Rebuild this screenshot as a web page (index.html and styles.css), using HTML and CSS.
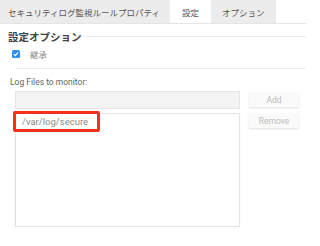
FILE: index.html
```html
<!DOCTYPE html>
<html lang="ja">
<head>
  <meta charset="UTF-8">
  <title>セキュリティログ監視ルールプロパティ</title>
  <link rel="stylesheet" href="styles.css">
</head>
<body>
  <div class="tabs">
    <div class="tab first">セキュリティログ監視ルールプロパティ</div>
    <div class="tab active">設定</div>
    <div class="tab">オプション</div>
  </div>
  <div class="content">
    <div class="section-head">
      <span class="legend">設定オプション</span>
      <span class="rule"></span>
    </div>
    <label class="check-row">
      <span class="checkbox">
        <svg viewBox="0 0 8 8" width="8" height="8"><path d="M1.8 4.2 L3.3 5.6 L6.2 2.4" fill="none" stroke="#fff" stroke-width="1.1"/></svg>
      </span>
      <span class="check-label">継承</span>
    </label>
    <div class="divider"></div>
    <div class="field-label">Log Files to monitor:</div>
    <div class="editor">
      <div class="left-col">
        <div class="path-input"></div>
        <div class="file-list">
          <div class="file-item">/var/log/secure</div>
          <div class="highlight"></div>
        </div>
      </div>
      <div class="right-col">
        <button class="btn">Add</button>
        <button class="btn">Remove</button>
      </div>
    </div>
  </div>
</body>
</html>
```

FILE: styles.css
```css
body {
  margin: 0;
  background: #fff;
  font-family: Roboto, "Noto Sans CJK JP", sans-serif;
  color: #555;
}
.tabs {
  display: flex;
  width: 306px;
  height: 23px;
  border-bottom: 1px solid #e6e6e6;
}
.tab {
  display: flex;
  align-items: center;
  padding: 0 11px;
  background: #ececec;
  font-size: 8.5px;
  color: #555;
}
.tab.first {padding-left: 8px; padding-right: 10px;}
.tab.active {background: #fff; padding: 0 12px;}
.content {width: 298px; padding-left: 8px;}
.section-head {
  display: flex;
  align-items: center;
  height: 14px;
  margin-top: 5px;
}
.legend {font-size: 10.5px; font-weight: bold; color: #444;}
.rule {flex: 1; height: 1px; background: #e8e8e8; margin-left: 4px;}
.check-row {
  display: flex;
  align-items: center;
  height: 10px;
  margin-top: 6px;
  padding-left: 4px;
}
.checkbox {
  width: 8px;
  height: 8px;
  border-radius: 1.5px;
  background: #2f8ef0;
  display: flex;
}
.check-label {font-size: 8.5px; color: #888; margin-left: 10px;}
.divider {height: 1px; background: #ececec; margin: 9px 0 0 8px;}
.field-label {font-size: 8.5px; color: #666; margin-top: 8px; padding-left: 2px; line-height: 11px;}
.editor {
  display: grid;
  grid-template-columns: 225px 50px;
  column-gap: 9px;
  margin-top: 3px;
  margin-left: 7px;
}
.path-input {
  background: #f3f3f3;
  border: 1px solid #e4e4e4;
  box-sizing: border-box;
  height: 18px;
}
.file-list {
  position: relative;
  height: 114px;
  margin-top: 4px;
  border: 1px solid #e4e4e4;
  border-left-color: #dcdcdc;
  box-shadow: 0 1px 1px rgba(0,0,0,0.07);
  box-sizing: border-box;
  padding: 2px 0 0 6px;
}
.file-item {font-size: 9.5px; color: #8a8a8a; line-height: 12px;}
.highlight {
  position: absolute;
  left: -3px;
  top: -3px;
  width: 81px;
  height: 15px;
  border: 3px solid #f5301c;
  border-radius: 2px;
}
.right-col {display: flex; flex-direction: column; gap: 6px; padding-top: 1px;}
.btn {
  height: 15px;
  padding: 0;
  border: none;
  border-radius: 1px;
  background: #fafafa;
  box-shadow: 0 1px 2px rgba(0,0,0,0.12);
  color: #bbb;
  font-family: Roboto, sans-serif;
  font-size: 8.5px;
}
```
